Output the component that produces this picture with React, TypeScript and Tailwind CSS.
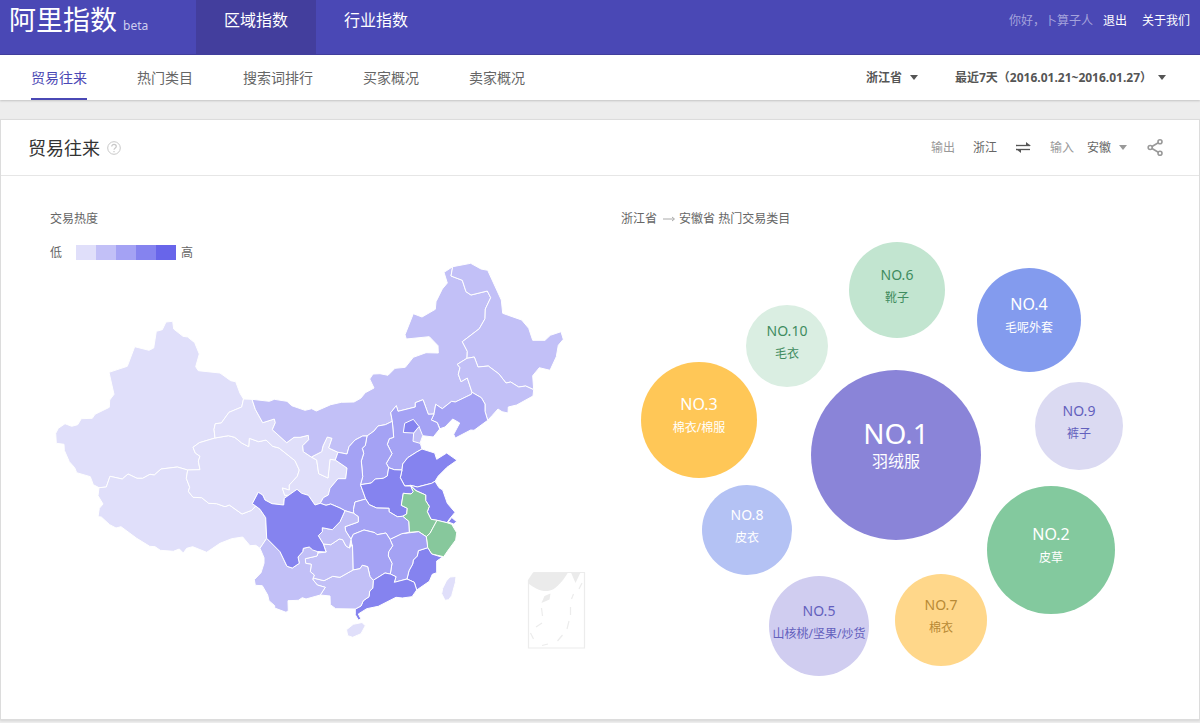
import { useState } from "react";

const TONES = {
  t1: "#e0dffa",
  t2: "#c2c0f7",
  t3: "#a4a2f4",
  t4: "#8583ef",
  t5: "#6865ea",
  picked: "#87c89c",
};

type Province = { name: string; tone: keyof typeof TONES; points: string };

const PROVINCES: Province[] = [
  {
    name: "新疆",
    tone: "t1",
    points:
      "166,322 172.7,321.3 173.7,329 183,336.3 187.7,337 194.7,342.7 199.3,354 195.7,366.7 198.3,370.7 220,373 230.7,380.7 235.7,381.7 240,393.3 243.5,399 241.7,407 229,412.3 221.3,423 215.3,423.7 214,429.3 215,438 199.3,442.7 193,447.3 195.3,453 200,456.3 198.3,461 200,469.7 187.7,470 177.3,467 161,469 154.3,475 150,474.3 142.7,478.3 137,478.3 128,474 122.3,479 110,476.3 106.3,487 99,487.7 93.3,484.7 90.3,476.7 76.7,472.7 74.7,467.7 69.3,461.7 64.3,450.3 64,444.3 56.3,443.3 55.7,433.3 58.3,428.3 65,423.7 71.7,426.3 77.7,424.7 81.3,418.7 92.3,418.3 95,414.3 109.3,407.3 109.7,400 114,394.3 109,372.3 127.3,366.3 134.7,346.7 149,350.3 153.7,348 156.3,331.3 162.3,329.7",
  },
  {
    name: "西藏",
    tone: "t1",
    points:
      "187.7,470 186.3,478.3 189.7,487.3 188.3,491.3 193,497.3 201.7,497.7 208.7,503.3 216.7,503.7 225,506.7 229.3,505 242,514 251.7,510.3 255.7,506 260,509.3 265.7,517.7 266.7,538.3 260,548.3 255.7,545.3 250,545.7 242.7,537 231.7,538.7 220,543.3 206.7,552.3 192.7,546.7 186.7,548.3 183.3,553 179.3,549 173.3,551.3 160.3,550.3 155,546.7 149.7,546.3 136.7,538.3 121,526.7 116,528 109.7,524.7 101.3,517 98,516.7 99.3,508.3 103,504 98,495.7 99,487.7 106.3,487 110,476.3 122.3,479 128,474 137,478.3 142.7,478.3 150,474.3 154.3,475 161,469 177.3,467",
  },
  {
    name: "青海",
    tone: "t1",
    points:
      "215,438 228.3,435.7 234.7,437.3 241.7,443 248.7,446.7 249.3,438.3 258.7,441.7 266,440 272.7,446.3 279,448 295,460.7 299.3,470 297.3,476.3 289.3,485 289.3,490 282.3,488 284.7,495.3 288.7,495.3 284.3,498.3 283.7,505 272,503.7 265,500 262.7,495 258.3,492.3 252.3,503.7 255.7,506 251.7,510.3 242,514 229.3,505 225,506.7 216.7,503.7 208.7,503.3 201.7,497.7 193,497.3 188.3,491.3 189.7,487.3 186.3,478.3 187.7,470 200,469.7 198.3,461 200,456.3 195.3,453 193,447.3 199.3,442.7",
  },
  {
    name: "甘肃",
    tone: "t1",
    points:
      "243.5,399 252,399.3 255.3,409.3 262.7,422.7 274.3,419 275.3,422.7 272.3,429.7 286.7,442.7 294,437.3 300,437.3 308.3,435.3 308.7,439.7 302.7,445.7 303.3,451.7 311.3,457 316.7,460 318.7,473.7 328,478 330,459.3 335.3,460 347,468 345.7,478.7 338,478.7 330,488.3 328.3,495 323.3,497.7 320.3,503.3 315,505 308.3,495.3 301.7,493.3 297,489.3 288.7,495.3 284.7,495.3 282.3,488 289.3,490 289.3,485 297.3,476.3 299.3,470 295,460.7 279,448 272.7,446.3 266,440 258.7,441.7 249.3,438.3 248.7,446.7 241.7,443 234.7,437.3 228.3,435.7 215,438 214,429.3 215.3,423.7 221.3,423 229,412.3 241.7,407",
  },
  {
    name: "宁夏",
    tone: "t1",
    points:
      "311.3,457 321.7,451.7 323,446 327.3,437 332,438.3 328.7,448 338,452.3 335.3,460 330,459.3 328,478 318.7,473.7 316.7,460",
  },
  {
    name: "内蒙古",
    tone: "t2",
    points:
      "252,399.3 269.3,401.3 274.3,399.3 287,401.3 291.7,405.7 305,410.3 311.7,408.7 316.3,411 330.7,404.7 341.3,402.3 354,402 360.7,398.3 365.3,392.7 374,388 369.7,379 373,374 380,373.7 388,375.3 395,368.3 405.3,367.3 413.3,357.3 426,352.7 438.3,353 438,345.7 429.3,336.7 406.3,339 405,334.7 413.3,313.7 422,317 435.3,309.3 436,301.7 442.3,289 447.3,283 444,272.3 452.7,266.7 451,276 462.3,280.3 466,291.7 471,295 487.3,291 490.7,297.7 485.3,309 485,318.7 479.3,328.7 462.3,341.7 467.3,351.3 467,358.3 457.3,364.3 460,367.7 458.3,374.3 461,381.7 467.3,378 472,392.3 471.3,394.3 455.3,402 451.7,401.3 442.3,408.7 435.7,404.3 434,414 428.3,414.3 423,399.7 415.3,402.7 415.3,407 398,411.3 396.3,405.7 390.7,412.7 392.3,421.3 385.3,424.7 378,426 374,431 367,436 362.7,436 355,440 349,446.7 347,454 338,452.3 328.7,448 332,438.3 327.3,437 323,446 321.7,451.7 311.3,457 303.3,451.7 302.7,445.7 308.7,439.7 308.3,435.3 300,437.3 294,437.3 286.7,442.7 272.3,429.7 275.3,422.7 274.3,419 262.7,422.7 255.3,409.3",
  },
  {
    name: "黑龙江",
    tone: "t2",
    points:
      "452.7,266.7 470.7,263.3 481,269 487.7,270.3 501.3,300 502.7,313.3 521.7,320 528.7,328.3 532.7,340.3 545,340.3 550.3,335.3 561,331.7 563.3,339.3 558.3,345.3 556.3,356.7 550,370.3 539.3,367.7 532.7,375.7 533.7,389.7 525.7,386 518.7,387 510.7,382 506,383 499,374 488.3,366 478,367 474.3,357 467,358.3 467.3,351.3 462.3,341.7 479.3,328.7 485,318.7 485.3,309 490.7,297.7 487.3,291 471,295 466,291.7 462.3,280.3 451,276",
  },
  {
    name: "吉林",
    tone: "t2",
    points:
      "467,358.3 474.3,357 478,367 488.3,366 499,374 506,383 510.7,382 518.7,387 525.7,386 533.7,389.7 533,396 516.7,405 508.3,407 508,413 502,411.7 498,409 492,415.7 487.7,420.3 485,411.3 485,404 481.3,397.7 472,392.3 467.3,378 461,381.7 458.3,374.3 460,367.7 457.3,364.3",
  },
  {
    name: "辽宁",
    tone: "t3",
    points:
      "472,392.3 481.3,397.7 485,404 485,411.3 487.7,420.3 474,430.3 470.7,430 455.3,438 453.7,434.3 459.7,423 452.7,419 445,427 440,428.7 437.3,422.7 431.3,420 434,414 435.7,404.3 442.3,408.7 451.7,401.3 455.3,402 471.3,394.3",
  },
  {
    name: "河北",
    tone: "t3",
    points:
      "392.3,421.3 390.7,412.7 396.3,405.7 398,411.3 415.3,407 415.3,402.7 423,399.7 428.3,414.3 434,414 431.3,420 437.3,422.7 439.7,429 433.3,437 422.7,435.7 420.3,443.3 422,449 416.7,452 407.7,457.7 402.7,464 402,470 394.3,469.7 388.7,467.7 386.3,463.3 392,453.7 387.3,444.3 389.3,438.7 393.7,437.3",
  },
  { name: "天津", tone: "t2", points: "419,426.5 422.7,435.7 420,443.3 413,441.3 413.7,433" },
  { name: "北京", tone: "t4", points: "413.3,419.3 404.7,423.3 403.3,432.5 413.7,433 419,426.5" },
  {
    name: "山东",
    tone: "t4",
    points:
      "402,470 402.7,464 407.7,457.7 416.7,452 422,449 434.7,453 436.7,459.3 446.7,453 457,460.3 447,467.3 438.3,476 435,481.3 431.7,483.3 417.3,487 410.7,485.3 404.7,486 400.3,477.7",
  },
  {
    name: "山西",
    tone: "t3",
    points:
      "392.3,421.3 393.7,437.3 389.3,438.7 387.3,444.3 392,453.7 386.3,463.3 388.7,467.7 387.3,476 383.3,478.3 375.3,479 371.3,483 360.5,484.7 362.7,476.7 361.3,461 363.7,453.3 362.3,448.3 365.3,445.3 367,436 374,431 378,426 385.3,424.7",
  },
  {
    name: "陕西",
    tone: "t3",
    points:
      "367,436 365.3,445.3 362.3,448.3 363.7,453.3 361.3,461 362.7,476.7 360.5,484.7 365.7,499 355,502 353.5,509.3 353.7,513.3 345,510.7 340,508 330.7,504 326,505.3 320.3,503.3 323.3,497.7 328.3,495 330,488.3 338,478.7 345.7,478.7 347,468 335.3,460 338,452.3 347,454 349,446.7 355,440 362.7,436",
  },
  {
    name: "河南",
    tone: "t4",
    points:
      "388.7,467.7 394.3,469.7 402,470 400.3,477.7 404.7,486 410.7,486 413.3,491.7 411,494 403.3,493.3 401.3,505.3 407.3,508.3 406.7,514 402.7,516.3 397.3,516.7 389,511.7 389,508.3 376.7,508 369.3,504.7 365.7,499 360.5,484.7 371.3,483 375.3,479 383.3,478.3 387.3,476",
  },
  {
    name: "江苏",
    tone: "t4",
    points:
      "410.7,485.3 417.3,487 431.7,483.3 435,481.3 439,487.7 442.7,490 447.3,503.3 455,512.3 449.3,519.3 447,522.7 437,520.3 431,519.3 427.3,511.7 429.3,506.3 425.7,500.7 425.7,495 416,490.7",
  },
  { name: "上海", tone: "t4", points: "451.7,517.5 456.7,521.7 453.7,524 448.3,522" },
  {
    name: "安徽",
    tone: "picked",
    points:
      "410.7,485.7 416,490.7 425.7,495 425.7,500.7 429.3,506.3 427.3,511.7 431,519.3 437,520.3 430,533.3 426.3,536.7 418.7,531.7 409.3,532.3 408.7,521.3 402.7,516.3 406.7,514 407.3,508.3 401.3,505.3 403.3,493.3 411,494 413.3,491.7",
  },
  {
    name: "浙江",
    tone: "picked",
    points:
      "437,520.3 447,522.7 451.7,524.3 456.7,532.7 455.7,540 448.3,550 443.7,556.7 431.7,554 427.7,547.7 426.3,536.7 430,533.3",
  },
  {
    name: "福建",
    tone: "t4",
    points:
      "427.7,547.7 431.7,554 442.3,557.3 436.7,561 436.7,572.7 432.3,574.3 429.3,581.3 416.7,590 414.3,582.3 407,579 409,570.7 412.7,564 413.3,560 417.3,556 418.3,550.7",
  },
  {
    name: "江西",
    tone: "t3",
    points:
      "418.7,531.7 426.3,536.7 427.7,547.7 418.3,550.7 417.3,556 413.3,560 412.7,564 409,570.7 407,579 394.3,582.3 396,576.7 390.3,574 392,563.3 388.3,556 388.7,551.7 392.7,545.7 390,539.3 401.7,533.7",
  },
  {
    name: "湖北",
    tone: "t3",
    points:
      "365.7,499 369.3,504.7 376.7,508 389,508.3 389,511.7 397.3,516.7 402.7,516.3 408.7,521.3 409.3,532.3 401.7,533.7 390,539.3 386,533 377,534.7 375,532.7 364,530 353.3,534.3 351,539.3 345.7,531 345,526.7 358.3,522 358.3,516.7 353.7,513.3 353.5,509.3 355,502",
  },
  {
    name: "湖南",
    tone: "t3",
    points:
      "351,539.3 353.3,534.3 364,530 375,532.7 377,534.7 386,533 390,539.3 392.7,545.7 388.7,551.7 388.3,556 392,563.3 390.3,574 385,573 373.3,580.3 370,576.7 367.7,566.7 362.3,565.3 360,568.7 353,570 352.5,548",
  },
  {
    name: "广东",
    tone: "t4",
    points:
      "373.3,580.3 385,573 390.3,574 396,576.7 394.3,582.3 407,579 414.3,582.3 416.7,590 412,596.7 402.3,598 396,597.3 378.3,606.3 366.7,608.7 358.3,614 361,619 358.3,620 355.3,614.7 355.3,609 361,606 363.3,600.7 369,596.7 369.7,591 372.7,588.3",
  },
  {
    name: "广西",
    tone: "t2",
    points:
      "353,570 360,568.7 362.3,565.3 367.7,566.7 370,576.7 373.3,580.3 372.7,588.3 369.7,591 369,596.7 363.3,600.7 361,606 355.3,609 335.7,608.7 330.3,604.7 330,596 320.3,595 325.3,587.3 317.3,585 312.7,579.3 314.3,578.3 324,580.7 332.7,576.3 340,577.3",
  },
  {
    name: "贵州",
    tone: "t2",
    points:
      "326.3,552 323.3,544 330.7,544.7 339.3,539 342.7,539.7 346,546 349.3,548 352.5,545 353,570 340,577.3 332.7,576.3 324,580.7 314.3,578.3 312.7,579.3 314.3,575 310.3,571.7 311.3,564.3 305.7,563.3 305.3,558.7 317,556 318,553",
  },
  {
    name: "重庆",
    tone: "t2",
    points:
      "345,510.7 353.7,513.3 358.3,516.7 358.3,522 345,526.7 345.7,531 351,539.3 349.3,548 346,546 342.7,539.7 339.3,539 330.7,544.7 323.3,544 318.3,535.7 322.3,531.7 322.3,527.7 332.3,529.7 340,521.7",
  },
  {
    name: "云南",
    tone: "t2",
    points:
      "266.7,538.3 280,551.7 287,566.3 292.3,568 299.3,563.3 298,557 302.7,551.7 303.3,548.3 309.3,547 317.3,551.5 318,553 317,556 305.3,558.7 305.7,563.3 311.3,564.3 310.3,571.7 314.3,575 312.7,579.3 317.3,585 325.3,587.3 320.3,595 306,599 302.3,597.7 298.3,600.3 288,600.7 288.3,610.7 286,612.3 274.7,608 274.7,605.7 269,600.7 267.7,595 262.3,585.7 255.3,585.3 254.3,579.7 261,572.7 264,563.3 264,557.7 260,548.3",
  },
  {
    name: "四川",
    tone: "t4",
    points:
      "258.3,492.3 262.7,495 265,500 272,503.7 283.7,505 284.3,498.3 297,489.3 301.7,493.3 308.3,495.3 315,505 320.3,503.3 326,505.3 330.7,504 340,508 345,510.7 340,521.7 332.3,529.7 322.3,527.7 322.3,531.7 318.3,535.7 323.3,544 326,552 317.3,551.5 312.7,550 309.3,547 303.3,548.3 302.7,551.7 298,557 299.3,563.3 292.3,568 287,566.3 280,551.7 266.7,538.3 265.7,517.7 260,509.3 255.7,506 252.3,503.7",
  },
  {
    name: "海南",
    tone: "t1",
    points: "353.3,624.3 362,622.5 365.3,625.7 361,633.7 352.7,637.3 347.7,635.7 346.5,629.7",
  },
  {
    name: "台湾",
    tone: "t1",
    points: "450,577 456,576.5 455.3,582.7 451.7,595.7 448.7,599.7 445,600.3 441.7,593.7 442.7,588.3 446.3,581",
  },
];

const BUBBLES = [
  { rank: 1, name: "羽绒服", place: "left-[190px] top-[130px] size-[170px]", look: "bg-[#8a84d8] text-white", size: "lg" },
  { rank: 2, name: "皮草", place: "left-[366px] top-[246px] size-32", look: "bg-[#83c99e] text-white", size: "md" },
  { rank: 3, name: "棉衣/棉服", place: "left-5 top-[122px] size-[116px]", look: "bg-[#ffc757] text-white", size: "md" },
  { rank: 4, name: "毛呢外套", place: "left-[356px] top-7 size-[104px]", look: "bg-[#839bee] text-white", size: "md" },
  { rank: 5, name: "山核桃/坚果/炒货", place: "left-[148px] top-[336px] size-[100px]", look: "bg-[#d0cdf0] text-[#6360bd]", size: "sm" },
  { rank: 6, name: "靴子", place: "left-[228px] top-[2px] size-24", look: "bg-[#c2e5d0] text-[#3f8c5f]", size: "sm" },
  { rank: 7, name: "棉衣", place: "left-[274px] top-[334px] size-[92px]", look: "bg-[#ffd78a] text-[#b98a35]", size: "sm" },
  { rank: 8, name: "皮衣", place: "left-[81px] top-[245px] size-[90px]", look: "bg-[#b4c2f4] text-white", size: "sm" },
  { rank: 9, name: "裤子", place: "left-[414px] top-[142px] size-[88px]", look: "bg-[#dbdaf2] text-[#6360bd]", size: "sm" },
  { rank: 10, name: "毛衣", place: "left-[125px] top-[65px] size-[82px]", look: "bg-[#daeee2] text-[#3f8c5f]", size: "sm" },
];

const BUBBLE_PAD: Record<string, string> = { sm: "pb-[9px]", md: "pb-[9px]", lg: "pb-4" };

const RANK_SIZE: Record<string, string> = {
  sm: "text-sm leading-[23px]",
  md: "text-base leading-[23px]",
  lg: "text-[28px] leading-7",
};

const NAME_SIZE: Record<string, string> = {
  sm: "text-xs leading-[23px]",
  md: "text-xs leading-[23px]",
  lg: "text-base leading-7",
};

const SUB_NAV = ["贸易往来", "热门类目", "搜索词排行", "买家概况", "卖家概况"];

function Caret({ className }: { className: string }) {
  return (
    <svg viewBox="0 0 8 5" className={`pointer-events-none h-[5px] w-2 ${className}`} aria-hidden="true">
      <path d="M0 0h8L4 5z" fill="currentColor" />
    </svg>
  );
}

function ChinaMap() {
  return (
    <svg viewBox="50 240 550 410" className="block h-[410px] w-[550px]" role="img" aria-label="交易热度地图">
      <g stroke="#ffffff" strokeWidth="1" strokeLinejoin="round">
        {PROVINCES.map((p) => (
          <polygon key={p.name} points={p.points} fill={TONES[p.tone]} />
        ))}
      </g>
      <g fill="none" stroke="#ececec" strokeWidth="1.2">
        <path d="M528.5 580v68h56v-75.5h-51" />
        <path d="M582 583l-3 6M573.5 594l-2 5M570.5 607v8M569 621l-2 8M562.5 635l-5 6M548 644l-6 1.500M530.5 633l3 6M536 627l6-4M541.500 608l1 8" />
      </g>
      <path
        d="M528 580l5-7.500h35c-3 5-6 9-10 13-3 3-6 5-10 5.500-8 .5-14-3-20-8zM541.500 603l3-7 6-2.500-1 6zM571 572.500h9.500l-5 10.500z"
        fill="#ebebeb"
      />
    </svg>
  );
}

export default function App() {
  const [tab, setTab] = useState(SUB_NAV[0]);

  return (
    <div className="min-h-screen bg-[#ededed] pb-[3px] font-['Noto_Sans','Noto_Sans_CJK_SC',sans-serif] text-xs text-[#666]">
      <header className="flex h-[55px] items-stretch border-b border-[#423f9e] bg-[#4a48b5] text-white">
        <a href="#home" className="flex w-[196px] items-baseline gap-[6px] pl-[9px] leading-10">
          <span className="text-[27px]">阿里指数</span>
          <span className="text-xs text-[#cfceef]">beta</span>
        </a>
        <nav className="flex text-base leading-[41px]">
          <a href="#region" aria-current="page" className="w-[120px] bg-[#433e9d] text-center">
            区域指数
          </a>
          <a href="#industry" className="w-[120px] text-center">
            行业指数
          </a>
        </nav>
        <div className="ml-auto flex pr-[10px] leading-[41px]">
          <span className="text-[#a5a3dc]">你好，卜算子人</span>
          <a href="#logout" className="ml-[10px]">
            退出
          </a>
          <a href="#about" className="ml-[15px]">
            关于我们
          </a>
        </div>
      </header>

      <div className="flex h-[45px] items-stretch justify-between bg-white pr-[34px] pl-[31px] shadow-[0_1px_2px_rgba(0,0,0,0.18)]">
        <nav className="flex gap-[50px] text-sm leading-[45px]">
          {SUB_NAV.map((item) => (
            <a
              key={item}
              href={`#${item}`}
              onClick={() => setTab(item)}
              className={item === tab ? "border-b-2 border-[#4a48b5] text-[#4a48b5]" : ""}
            >
              {item}
            </a>
          ))}
        </nav>
        <div className="flex items-center gap-[37px] font-bold text-[#555]">
          <label className="flex items-center">
            <select aria-label="省份" className="w-11 appearance-none bg-transparent leading-5">
              <option>浙江省</option>
            </select>
            <Caret className="" />
          </label>
          <label className="flex items-center">
            <select aria-label="日期范围" className="w-[203px] appearance-none bg-transparent leading-5">
              <option>最近7天（2016.01.21~2016.01.27）</option>
            </select>
            <Caret className="" />
          </label>
        </div>
      </div>

      <main className="mt-[19px] border border-[#dcdcdc] bg-white shadow-[0_1px_2px_rgba(0,0,0,0.1)]">
        <div className="flex h-14 items-center justify-between border-b border-[#e6e6e6] pr-9 pl-[27px]">
          <div className="flex items-center gap-[7px]">
            <h1 className="text-lg leading-6 text-[#333]">贸易往来</h1>
            <button type="button" aria-label="说明">
              <svg viewBox="0 0 14 14" className="block size-[14px]" fill="none" stroke="#c8c8c8">
                <circle cx="7" cy="7" r="6.300" />
                <path d="M4.700 5.600c0-3 4.600-3 4.600 0 0 1.300-2.300 1.500-2.300 3.200M7 10v1.300" strokeWidth="1.200" />
              </svg>
            </button>
          </div>
          <div className="flex items-center">
            <span className="text-[#999]">输出</span>
            <span className="ml-[18px]">浙江</span>
            <button type="button" aria-label="互换" className="mx-[19px]">
              <svg viewBox="0 0 15 11" className="block h-[11px] w-[15px]" fill="none" stroke="#555555" strokeWidth="1.300">
                <path d="M0 3.500h14" />
                <path d="M0 7.500h14" />
                <path d="M10 0l5 4h-5zM5 11L0 7h5z" fill="#555555" stroke="none" />
              </svg>
            </button>
            <span className="text-[#999]">输入</span>
            <label className="ml-[13px] flex items-center">
              <select aria-label="输入省份" className="w-8 appearance-none bg-transparent leading-5">
                <option>安徽</option>
              </select>
              <Caret className="text-[#999]" />
            </label>
            <button type="button" aria-label="分享" className="ml-5">
              <svg viewBox="0 0 16 18" className="block h-[18px] w-4" fill="none" stroke="#999999" strokeWidth="1.600">
                <circle cx="3.200" cy="8.500" r="2" />
                <circle cx="13" cy="2.800" r="2" />
                <circle cx="13" cy="14.200" r="2" />
                <path d="M5 7.500l6.300-3.700M5 9.500l6.300 3.700" />
              </svg>
            </button>
          </div>
        </div>

        <div className="grid grid-cols-[571fr_578fr] pt-[33px] pb-11 pl-[49px]">
          <section>
            <h2 className="leading-5">交易热度</h2>
            <div className="relative">
              <div className="flex h-[15px] items-center leading-[15px] mt-4">
                <span className="w-[26px]">低</span>
                <span className="flex h-[15px]">
                  <i className="w-5 bg-[#e0dffa]" />
                  <i className="w-5 bg-[#c2c0f7]" />
                  <i className="w-5 bg-[#a4a2f4]" />
                  <i className="w-5 bg-[#8583ef]" />
                  <i className="w-5 bg-[#6865ea]" />
                </span>
                <span className="ml-[5px]">高</span>
              </div>
              <div className="absolute -top-[5px] left-0">
                <ChinaMap />
              </div>
            </div>
          </section>

          <section>
            <h2 className="flex items-center leading-5">
              浙江省
              <svg viewBox="0 0 12 6" className="mr-1 ml-[6px] h-[6px] w-3" aria-hidden="true">
                <path d="M0 3h11M9 1l2.500 2L9 5" fill="none" stroke="#aaaaaa" />
              </svg>
              安徽省 热门交易类目
            </h2>
            <div className="relative mt-[11px] h-[435px]">
              {BUBBLES.map((b) => (
                <a
                  key={b.rank}
                  href={`#no${b.rank}`}
                  className={`absolute flex flex-col items-center justify-center rounded-full whitespace-nowrap ${BUBBLE_PAD[b.size]} ${b.place} ${b.look}`}
                >
                  <span className={RANK_SIZE[b.size]}>NO.{b.rank}</span>
                  <span className={NAME_SIZE[b.size]}>{b.name}</span>
                </a>
              ))}
            </div>
          </section>
        </div>
      </main>
    </div>
  );
}
